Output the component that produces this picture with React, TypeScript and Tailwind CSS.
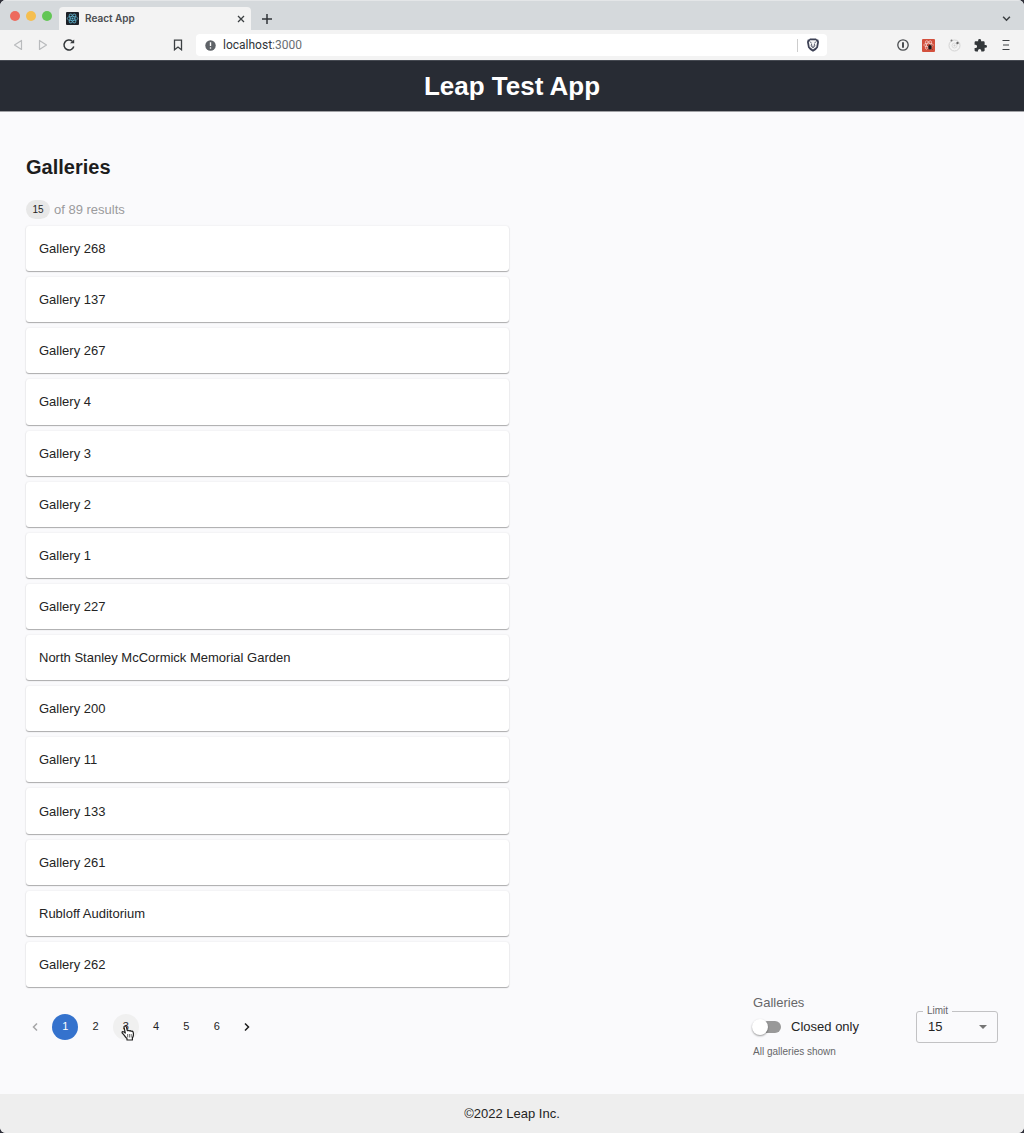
import { useState } from "react";

const galleries = [
  "Gallery 268",
  "Gallery 137",
  "Gallery 267",
  "Gallery 4",
  "Gallery 3",
  "Gallery 2",
  "Gallery 1",
  "Gallery 227",
  "North Stanley McCormick Memorial Garden",
  "Gallery 200",
  "Gallery 11",
  "Gallery 133",
  "Gallery 261",
  "Rubloff Auditorium",
  "Gallery 262",
];

function ReactMark() {
  return (
    <svg viewBox="0 0 14 14" className="size-[13px] shrink-0" aria-hidden="true">
      <rect width="14" height="14" rx="1" fill="#1c2027" />
      <g fill="none" stroke="#5fb4d0" strokeWidth="0.8">
        <ellipse cx="7" cy="7" rx="5.6" ry="2.2" />
        <ellipse cx="7" cy="7" rx="5.6" ry="2.2" transform="rotate(60 7 7)" />
        <ellipse cx="7" cy="7" rx="5.6" ry="2.2" transform="rotate(120 7 7)" />
      </g>
      <circle cx="7" cy="7" r="1.1" fill="#5fb4d0" />
    </svg>
  );
}

function TabStrip() {
  return (
    <div className="flex h-[30px] items-end bg-[#d5d9dc] border-t border-[#e4e6e8]">
      <div className="mb-[9px] ml-[10px] flex gap-[6px]">
        <button aria-label="Close window" className="size-[10px] rounded-full bg-[#ed6a5e]" />
        <button aria-label="Minimize window" className="size-[10px] rounded-full bg-[#f5be4f]" />
        <button aria-label="Zoom window" className="size-[10px] rounded-full bg-[#62c655]" />
      </div>
      <div className="ml-[7px] flex h-[23px] w-[192px] items-center rounded-t-[4px] bg-[#f3f3f3] pl-[7px] pr-[5px]">
        <ReactMark />
        <span className="ml-[6px] flex-1 font-[Inter] text-[10px] font-semibold text-[#4a4d51]">React App</span>
        <button aria-label="Close tab" className="flex size-[10px] items-center justify-center">
          <svg viewBox="0 0 8 8" className="size-[8px]" fill="none" stroke="#3c4043" strokeWidth="1.3">
            <path d="M1 1l6 6M7 1L1 7" />
          </svg>
        </button>
      </div>
      <button aria-label="New tab" className="mb-[6px] ml-[11px]">
        <svg viewBox="0 0 10 10" className="size-[10px]" fill="none" stroke="#303438" strokeWidth="1.5">
          <path d="M5 0v10M0 5h10" />
        </svg>
      </button>
      <button aria-label="Search tabs" className="mb-[7px] ml-auto mr-[13px]">
        <svg viewBox="0 0 8 8" className="size-[9px]" fill="none" stroke="#3c4043" strokeWidth="1.4">
          <path d="M1 2.5l3 3 3-3" />
        </svg>
      </button>
    </div>
  );
}

function Toolbar() {
  return (
    <div className="flex h-[30px] items-center bg-[#f3f3f3] pl-[13px] pr-[12px]">
      <button aria-label="Back" className="mr-[15px]">
        <svg viewBox="0 0 10 12" className="h-[12px] w-[10px]" fill="none" stroke="#b9bbbd" strokeWidth="1.2" strokeLinejoin="round">
          <path d="M8.5 1.5v9L1.5 6z" />
        </svg>
      </button>
      <button aria-label="Forward" className="mr-[14px]">
        <svg viewBox="0 0 10 12" className="h-[12px] w-[10px]" fill="none" stroke="#b9bbbd" strokeWidth="1.2" strokeLinejoin="round">
          <path d="M1.5 1.5v9l7-4.5z" />
        </svg>
      </button>
      <button aria-label="Reload">
        <svg viewBox="0 0 14 14" className="size-[14px]">
          <path d="M11.8 8.5A5 5 0 1 1 10.3 3.2" fill="none" stroke="#33373a" strokeWidth="1.5" />
          <path d="M8 5.2h4.2V1.6z" fill="#33373a" />
        </svg>
      </button>
      <button aria-label="Bookmark this page" className="ml-[97px]">
        <svg viewBox="0 0 10 12" className="h-[12px] w-[10px]" fill="none" stroke="#3c4043" strokeWidth="1.3">
          <path d="M1.5 1.2h7v9.6L5 8 1.5 10.8z" />
        </svg>
      </button>
      <div className="ml-[13px] flex h-[22px] flex-1 items-center rounded-[4px] bg-white pl-[9px] pr-[8px]">
        <svg viewBox="0 0 12 12" className="size-[11px] shrink-0" aria-hidden="true">
          <circle cx="6" cy="6" r="5.7" fill="#5f6368" />
          <path d="M6 2.5v4" stroke="#fff" strokeWidth="1.5" />
          <circle cx="6" cy="8.7" r="0.9" fill="#fff" />
        </svg>
        <div className="ml-[7px] flex-1 font-[Roboto] text-[12px] text-[#303438]">
          localhost<span className="text-[#6a6e72]">:3000</span>
        </div>
        <span className="mr-[9px] h-[13px] w-px bg-[#cdcdcd]" />
        <button aria-label="Brave Shields">
          <svg viewBox="0 0 12 14" className="h-[14px] w-[12px]">
            <path d="M3 .5h6l1 1h1.2L12 4l-1 5.5Q10 11.500 6 13.8 2 11.5 1 9.5L0 4l.8-2.5H2z" fill="#3d4155" />
            <path d="M3.2 2.300h5.6l1.3 2.200-.8 4.400L6 11.600 2.700 8.900l-.8-4.400z" fill="#f5f5f5" />
            <path d="M3 3.800l1.800 1.500M9 3.800L7.200 5.300M4.700 6l-.6 2L6 9.700 7.900 8l-.6-2M6 7.500v2" stroke="#3d4155" strokeWidth=".8" fill="none" />
          </svg>
        </button>
      </div>
      <div className="ml-[70px] flex items-center gap-[13px]">
        <button aria-label="1Password">
          <svg viewBox="0 0 12 12" className="size-[12px]">
            <circle cx="6" cy="6" r="5.200" fill="none" stroke="#4a4d50" strokeWidth="1.300" />
            <path d="M6 3.200v5.600" stroke="#4a4d50" strokeWidth="2" />
          </svg>
        </button>
        <button aria-label="React Developer Tools">
          <svg viewBox="0 0 13 13" className="size-[13px]">
            <rect width="13" height="13" rx="1" fill="#d3503d" />
            <g fill="none" stroke="#f6d5cf" strokeWidth=".7">
              <ellipse cx="6.500" cy="6" rx="4.800" ry="1.900" />
              <ellipse cx="6.500" cy="6" rx="4.800" ry="1.900" transform="rotate(60 6.500 6)" />
              <ellipse cx="6.500" cy="6" rx="4.800" ry="1.900" transform="rotate(120 6.500 6)" />
            </g>
            <ellipse cx="8" cy="8.300" rx="1.600" ry="2.300" fill="#1f1414" />
            <path d="M5.500 6.500l5 4M10.500 6.500l-5 4M8 5v6" stroke="#1f1414" strokeWidth=".6" />
          </svg>
        </button>
        <button aria-label="Orbit extension">
          <svg viewBox="0 0 13 13" className="size-[13px]">
            <circle cx="6.500" cy="6.500" r="5.500" fill="none" stroke="#d3d3d3" />
            <circle cx="6.500" cy="6.500" r="2.500" fill="none" stroke="#dcdcdc" />
            <circle cx="6.500" cy="6.500" r="1" fill="#d0d0d0" />
            <circle cx="3.500" cy="1.500" r="1" fill="#777" />
            <circle cx="9.500" cy="4" r="1.200" fill="#666" />
          </svg>
        </button>
        <button aria-label="Extensions">
          <svg viewBox="1 1 22 22" className="size-[13px]" fill="#33373a">
            <path d="M20.500 11H19V7c0-1.100-.9-2-2-2h-4V3.500a2.500 2.500 0 0 0-5 0V5H4c-1.100 0-2 .9-2 2v3.800h1.500a2.700 2.700 0 0 1 0 5.400H2V20c0 1.100.9 2 2 2h3.800v-1.500a2.700 2.700 0 0 1 5.400 0V22H17c1.100 0 2-.9 2-2v-4h1.500a2.500 2.500 0 0 0 0-5z" />
          </svg>
        </button>
        <button aria-label="Menu">
          <svg viewBox="0 0 12 12" className="size-[12px]" stroke="#3c4043" strokeWidth="1.200">
            <path d="M2.500 1.500h7M3 6h6M2.500 10.500h7" />
          </svg>
        </button>
      </div>
    </div>
  );
}

function HandCursor() {
  return (
    <svg viewBox="0 0 14 16" className="pointer-events-none absolute left-[8px] top-[11px] h-[16px] w-[14px]" aria-hidden="true">
      <path
        d="M3 2.200Q2.900 1 4 1t1.400 1.200l.9 3.500q1.100-.8 1.900.2 1.200-.7 2 .4 1.400-.5 1.900.8.500 1.200.3 3-.2 1.700-1 2.700v2.200H6v-1.400Q4.400 12 3.300 10.400 2.300 9 1.200 8 .7 6.900 1.800 6.600q1.200 0 2.500 1.400z"
        fill="#fff"
        stroke="#222"
        strokeWidth="1.200"
        strokeLinejoin="round"
      />
      <path d="M6.600 9v3.500M8.400 9v3.500M10.200 9v3.500" stroke="#444" strokeWidth=".8" />
    </svg>
  );
}

function Chevron({ back = false }: { back?: boolean }) {
  return (
    <svg viewBox="0 0 6 10" className="h-[10px] w-[6px]" fill="none" stroke="currentColor" strokeWidth="1.500">
      <path d={back ? "M5 1.500L1.500 5 5 8.500" : "M1 1.500L4.500 5 1 8.500"} />
    </svg>
  );
}

function Pagination() {
  const [page, setPage] = useState(1);
  const item = "relative flex size-[26px] items-center justify-center rounded-full text-[11px]";
  return (
    <nav aria-label="Gallery pages" className="-ml-1 flex w-[238px] justify-between">
      <button aria-label="Previous page" disabled={page === 1} onClick={() => setPage(page - 1)} className={`${item} text-[#242424] disabled:text-[#a5a5a7]`}>
        <Chevron back />
      </button>
      {[1, 2, 3, 4, 5, 6].map((n) => (
        <button
          key={n}
          aria-current={n === page ? "page" : undefined}
          onClick={() => setPage(n)}
          className={`${item} ${n === page ? "bg-[#3472cd] text-white" : n === 3 ? "bg-[#f0f0f0] text-[#242424]" : "text-[#242424]"}`}
        >
          {n}
          {n === 3 && <HandCursor />}
        </button>
      ))}
      <button aria-label="Next page" disabled={page === 6} onClick={() => setPage(page + 1)} className={`${item} text-[#1d1d1d]`}>
        <Chevron />
      </button>
    </nav>
  );
}

function Filters() {
  return (
    <div className="flex items-center gap-[57px]">
      <fieldset>
        <legend className="text-[13px] leading-4 text-[#666668]">Galleries</legend>
        <label className="mt-[6px] flex h-[20px] items-center">
          <input type="checkbox" role="switch" className="peer sr-only" />
          <span className="relative h-[12px] w-[28px] rounded-full bg-[#999] before:absolute before:-left-px before:-top-[2px] before:size-[16px] before:rounded-full before:bg-white before:shadow-[0_1px_2px_rgba(0,0,0,0.4)] peer-checked:bg-[#3472cd] peer-checked:before:left-[13px]" />
          <span className="ml-[10px] text-[13px] text-[#242424]">Closed only</span>
        </label>
        <p className="mt-[9px] text-[10px] leading-3 text-[#666668]">All galleries shown</p>
      </fieldset>
      <div className="relative h-8 w-[82px]">
        <label htmlFor="limit" className="absolute -top-[6px] left-[7px] bg-[#fafafc] px-1 text-[10px] leading-3 text-[#666668]">
          Limit
        </label>
        <select id="limit" defaultValue="15" className="h-full w-full appearance-none rounded-[3px] border border-[#c2c2c4] bg-transparent pl-[11px] text-[13px] text-[#242424]">
          <option>5</option>
          <option>10</option>
          <option>15</option>
        </select>
        <svg viewBox="0 0 8 4" className="pointer-events-none absolute right-[11px] top-[14px] h-[4px] w-[8px]" aria-hidden="true">
          <path d="M0 0h8L4 4z" fill="#757575" />
        </svg>
      </div>
    </div>
  );
}

export default function App() {
  return (
    <div className="bg-[#30313a]">
      <div className="flex min-h-screen flex-col overflow-hidden rounded-[6px] bg-[#fafafc] font-['Liberation_Sans',Arial,sans-serif] text-[#242424]">
        <TabStrip />
        <Toolbar />
        <header className="flex h-[52px] items-center justify-center border-b border-t border-b-[#a0a1a5] border-t-[#464a52] bg-[#282c34]">
          <h1 className="text-[26px] font-bold leading-8 text-white">Leap Test App</h1>
        </header>
        <main className="flex flex-1 flex-col px-[26px] pt-[42px]">
          <h2 className="text-[20px] font-bold leading-[26px] text-[#1d1d1d]">Galleries</h2>
          <p className="mt-[20px] flex h-[19px] items-center gap-1 text-[13px] text-[#9b9b9d]">
            <span className="flex h-[19px] w-[24px] items-center justify-center rounded-full bg-[#e8e8e8] text-[10px] text-[#242424]">15</span>
            of 89 results
          </p>
          <ul className="mt-[7px] grid min-h-[761px] w-1/2 auto-rows-fr gap-[6px] pr-[3px]">
            {galleries.map((name) => (
              <li key={name} className="flex items-center rounded-[3px] bg-white px-[13px] pt-px text-[13px] leading-5 shadow-[0_1px_1px_rgba(0,0,0,0.3),0_0_2px_rgba(0,0,0,0.1)]">
                {name}
              </li>
            ))}
          </ul>
          <div className="mt-[8px] flex items-center justify-between pb-[34px]">
            <Pagination />
            <Filters />
          </div>
        </main>
        <footer className="flex h-[39px] items-center justify-center bg-[#eeeeee] text-[13px]">©2022 Leap Inc.</footer>
      </div>
    </div>
  );
}
